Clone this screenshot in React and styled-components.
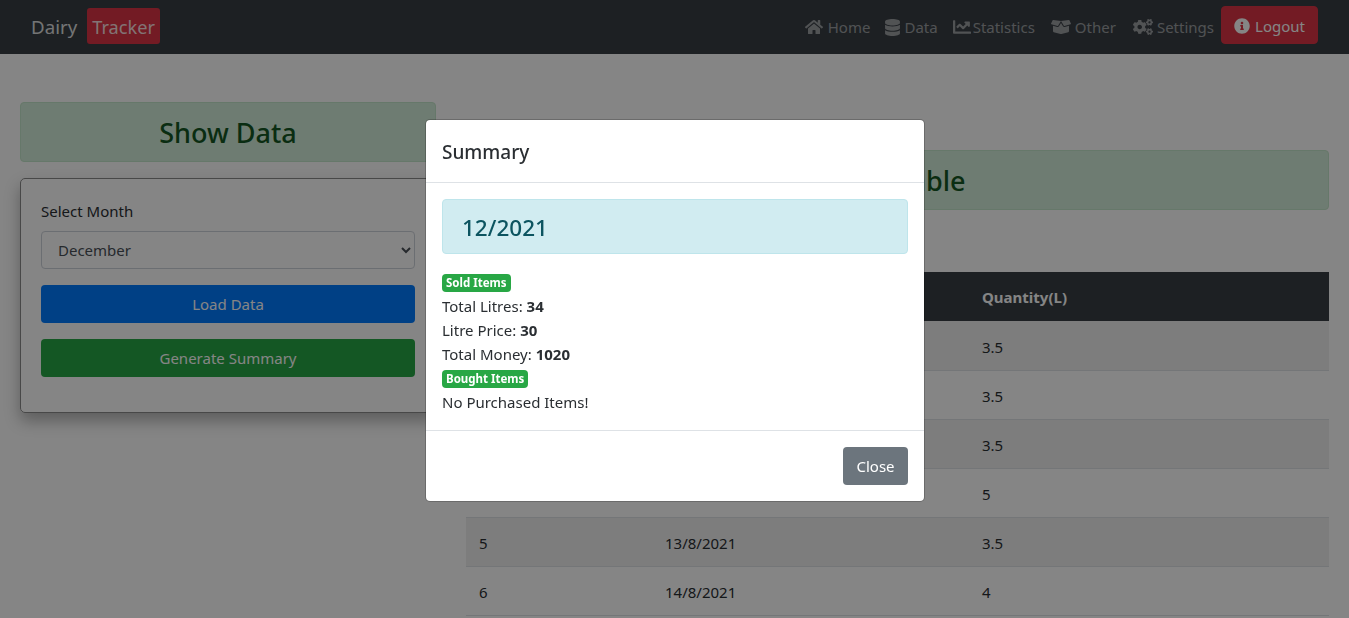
import React from "react";
import styled, { createGlobalStyle } from "styled-components";
import { FaHome, FaDatabase, FaChartLine, FaBoxOpen, FaCogs, FaInfoCircle } from "react-icons/fa";

const Global = createGlobalStyle`
  html, body { margin: 0; height: 618px; overflow: hidden; background: #fff; }
  body { font-family: "Noto Sans", "Open Sans", "Liberation Sans", sans-serif; font-size: 15px; line-height: 24px; color: #2a2e32; }
  * { box-sizing: border-box; }
`;

const Nav = styled.nav`
  display: flex; align-items: center; justify-content: space-between;
  height: 54px; padding: 0 31px; background: #383e44;
`;
const Brand = styled.div`
  display: flex; align-items: center; gap: 10px; font-size: 18.7px; color: rgba(255,255,255,.85);
`;
const BrandTag = styled.span`
  display: flex; align-items: center; height: 36px; margin-bottom: 2px; padding: 2px 5px 0; background: #dc3545; border-radius: 3px; font-size: 18.2px;
`;
const NavLinks = styled.div`display: flex; align-items: center;`;
const NavLink = styled.a`
  display: flex; align-items: center; gap: ${p => p.$gap}px; margin-right: ${p => p.$after}px; color: rgba(255,255,255,.5);
  svg { font-size: ${p => p.$icon}px; flex-shrink: 0; }
`;
const LogoutButton = styled.button`
  display: flex; align-items: center; justify-content: center; gap: 5px; width: 97px; height: 38px; margin: 0 0 4px 0; padding: 2px 0 0;
  border: 1px solid #dc3545; border-radius: 4px; background: #dc3545; color: #fff; font: inherit;
  svg { font-size: 16px; }
`;
const Main = styled.main`display: flex; gap: 30px; padding: 48px 20px 0;`;
const LeftColumn = styled.section`flex: 0 0 416px;`;
const RightColumn = styled.section`flex: 1; padding-top: 48px;`;
const TitleAlert = styled.div`
  display: flex; align-items: center; justify-content: center; height: 60px; padding-top: 2px;
  background: #d4edda; border: 1px solid #c3e6cb; border-radius: 4px; color: #155724;
  font-size: 27px; font-weight: 500;
`;
const Card = styled.div`
  margin-top: 16px; height: 235px; padding: 20px 20px 0; border: 1px solid #8a8a8a; border-radius: 5px;
  box-shadow: 0 8px 16px rgba(0,0,0,.3);
`;
const Label = styled.label`display: block; margin-bottom: 8px;`;
const Select = styled.select`
  display: block; width: 100%; height: 38px; padding: 0 12px; border: 1px solid #ced4da; border-radius: 4px;
  background: #fff; color: #495057; font: inherit; margin-bottom: 16px;
`;
const WideButton = styled.button`
  display: block; width: 100%; height: 38px; margin-bottom: 16px; border: 0; border-radius: 4px;
  background: ${p => p.$bg}; color: #fff; font: inherit;
`;
const Table = styled.table`
  width: 863px; margin-top: 62px; border-collapse: collapse; table-layout: fixed;
`;
const HeadCell = styled.th`
  text-align: left; padding: 13px 13px 12px; height: 49px; background: #383e44; color: #fff; font-weight: 700;
`;
const Row = styled.tr`background: ${p => (p.$odd ? "rgba(0,0,0,.06)" : "transparent")};`;
const Cell = styled.td`
  padding: ${p => (p.$first ? 14 : 13)}px 13px 11px; border-bottom: 1px solid #dee2e6;
`;
const Backdrop = styled.div`position: fixed; inset: 0; background: rgba(0,0,0,.48);`;
const Modal = styled.div`
  position: fixed; left: 425px; top: 119px; width: 500px; height: 383px; background: #fff;
  border: 1px solid rgba(0,0,0,.2); border-radius: 5px; background-clip: padding-box;
  display: flex; flex-direction: column;
`;
const ModalHeader = styled.header`
  height: 63px; padding: 2px 16px 0; display: flex; align-items: center; border-bottom: 1px solid #dee2e6;
  font-size: 19px; font-weight: 500;
`;
const ModalBody = styled.div`flex: 1; padding: 16px;`;
const InfoAlert = styled.div`
  height: 55px; padding: 2px 19px 0; display: flex; align-items: center; margin-bottom: 20px;
  background: #d1ecf1; border: 1px solid #bee5eb; border-radius: 4px; color: #0c5460; font-size: 22.5px; font-weight: 500;
`;
const Badge = styled.div`
  display: table; padding: 0 4px; height: 18px; line-height: 18px; background: #28a745; color: #fff;
  border-radius: 4px; font-size: 11.5px; font-weight: 700; margin: 4px 0 2px;
`;
const InfoLine = styled.div`line-height: 24px;`;
const ModalFooter = styled.footer`
  height: 71px; padding: 0 16px; display: flex; align-items: center; justify-content: flex-end; border-top: 1px solid #dee2e6;
`;
const CloseButton = styled.button`
  width: 65px; height: 38px; border: 0; border-radius: 4px; background: #6c757d; color: #fff; font: inherit;
`;

const links = [
  { Icon: FaHome, text: "Home", icon: 18, gap: 5, after: 14 },
  { Icon: FaDatabase, text: "Data", icon: 17, gap: 3, after: 15 },
  { Icon: FaChartLine, text: "Statistics", icon: 18, gap: 2, after: 16 },
  { Icon: FaBoxOpen, text: "Other", icon: 20, gap: 4, after: 17 },
  { Icon: FaCogs, text: "Settings", icon: 20, gap: 4, after: 7 },
];
const rows = [
  [1, "9/8/2021", "3.5"], [2, "10/8/2021", "3.5"], [3, "11/8/2021", "3.5"],
  [4, "12/8/2021", "5"], [5, "13/8/2021", "3.5"], [6, "14/8/2021", "4"],
];

export default function App() {
  return (
    <>
      <Global />
      <Nav>
        <Brand>Dairy <BrandTag>Tracker</BrandTag></Brand>
        <NavLinks>
          {links.map(({ Icon, text, icon, gap, after }) => (
            <NavLink key={text} $icon={icon} $gap={gap} $after={after}><Icon />{text}</NavLink>
          ))}
          <LogoutButton><FaInfoCircle />Logout</LogoutButton>
        </NavLinks>
      </Nav>
      <Main>
        <LeftColumn>
          <TitleAlert>Show Data</TitleAlert>
          <Card>
            <Label>Select Month</Label>
            <Select defaultValue="December"><option>December</option></Select>
            <WideButton $bg="#007bff">Load Data</WideButton>
            <WideButton $bg="#28a745">Generate Summary</WideButton>
          </Card>
        </LeftColumn>
        <RightColumn>
          <TitleAlert>Data Table</TitleAlert>
          <Table>
            <colgroup><col width="186" /><col width="317" /><col width="360" /></colgroup>
            <thead>
              <tr><HeadCell>#</HeadCell><HeadCell>Date</HeadCell><HeadCell>Quantity(L)</HeadCell></tr>
            </thead>
            <tbody>
              {rows.map(([n, d, q], i) => (
                <Row key={n} $odd={i % 2 === 0}>
                  <Cell $first={i === 0}>{n}</Cell><Cell $first={i === 0}>{d}</Cell><Cell $first={i === 0}>{q}</Cell>
                </Row>
              ))}
            </tbody>
          </Table>
        </RightColumn>
      </Main>
      <Backdrop />
      <Modal>
        <ModalHeader>Summary</ModalHeader>
        <ModalBody>
          <InfoAlert>12/2021</InfoAlert>
          <Badge>Sold Items</Badge>
          <InfoLine>Total Litres: <b>34</b></InfoLine>
          <InfoLine>Litre Price: <b>30</b></InfoLine>
          <InfoLine>Total Money: <b>1020</b></InfoLine>
          <Badge>Bought Items</Badge>
          <InfoLine>No Purchased Items!</InfoLine>
        </ModalBody>
        <ModalFooter><CloseButton>Close</CloseButton></ModalFooter>
      </Modal>
    </>
  );
}
